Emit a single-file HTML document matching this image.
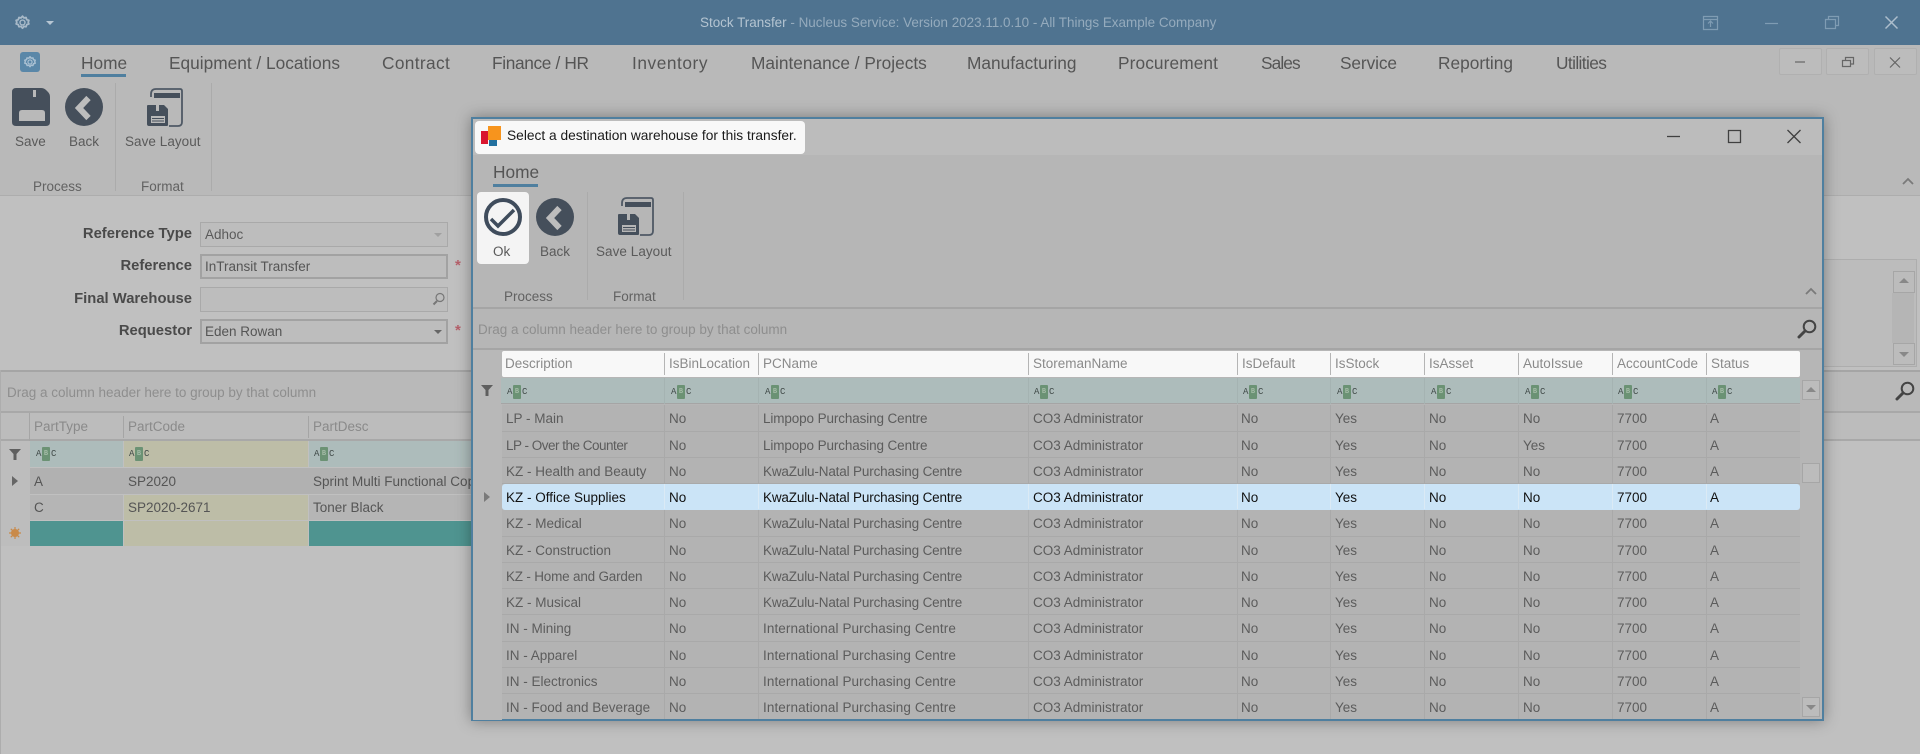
<!DOCTYPE html>
<html style="background:#c0c0c0"><head><meta charset="utf-8"><title>Stock Transfer</title>
<style>
html,body{margin:0;padding:0}
body{width:1920px;height:754px;position:relative;overflow:hidden;background:#c0c0c0;font-family:"Liberation Sans",sans-serif;font-size:13.5px;color:#555;filter:blur(.3px)}
div,span,svg{position:absolute;box-sizing:border-box}
span,.t{white-space:nowrap;line-height:16px}
.tab{top:52px;font-size:17.3px;line-height:22px;color:#555}
.lb{font-size:13.5px;color:#5a5a5a;text-align:center}
.grp{font-size:13.5px;color:#626262;text-align:center}
.sep{width:1px;background:#ababab}
.fn{right:1728px;font-weight:bold;color:#4a4a4a;font-size:14.8px}
.inp{left:200px;width:248px;height:25px;border:1px solid #a9a9a9;background:#bdbdbd;padding:4px 4px;line-height:16px;color:#5a5a5a;font-size:13.5px}
.inp.on{border:2px solid #a2a2a2;padding:3px 3px;color:#555}
.hd{color:#8a8a8a;font-size:13.5px}
.r{left:502px;width:1298px;border-bottom:1px solid #a9a9a9;background:#b3b3b3;color:#5c5c5c;font-size:13.5px}
.r span{top:5.500px}
.r i{position:absolute;top:0;bottom:0;width:1px;background:#a9a9a9}
.c0{left:4px}.c1{left:167px}.c2{left:261px}.c3{left:531px}.c4{left:739px}.c5{left:833px}.c6{left:927px}.c7{left:1021px}.c8{left:1115px}.c9{left:1208px}
.k{letter-spacing:-.16px}.l{letter-spacing:-.12px}.n{letter-spacing:.1px}
.r.sel{background:#cbe4f7;color:#111;border-radius:3px;border-bottom-color:#cbe4f7}
.r.sel i{background:#dbeaf5}
.abc{width:24px;height:15px}
.abc b{position:absolute;top:1px;font:normal 9px/13px "Liberation Mono",monospace;color:#404a48}
.abc em{position:absolute;left:6px;top:0;width:8px;height:14px;background:#6b9274;border-radius:1px;font:bold 7px/14px "Liberation Mono",monospace;color:#a5bca8;text-align:center}
.abc b+em+b{left:15px!important}
.sb{background:#bcbcbc;border:1px solid #a6a6a6}
</style></head><body>

<svg width="0" height="0" style="left:0;top:0"><defs>
<symbol id="floppy" viewBox="0 0 38 38"><path fill="#454f5b" fill-rule="evenodd" d="M4 0H29Q32 0 34 2L36 4Q38 6 38 9V34Q38 38 34 38H4Q0 38 0 34V4Q0 0 4 0ZM21 2V9H24V2ZM7 25V33H33V25Q33 22 30 22H10Q7 22 7 25Z"/></symbol>
<symbol id="back" viewBox="0 0 38 38"><circle cx="19" cy="19" r="19" fill="#454f5b"/><path fill="none" stroke="#bdbdbd" stroke-width="6" d="M23.500 10L14 20L23.500 30"/></symbol>
<symbol id="layout" viewBox="0 0 36 40"><path fill="none" stroke="#4f5965" stroke-width="1.800" d="M4 9V6Q4 1 9 1H33Q35 1 35 3V34Q35 38 31 38H22"/><rect x="7" y="5" width="26" height="5" fill="#454f5b"/><path fill="#454f5b" fill-rule="evenodd" d="M1 17H9V23H12V17H17L21 21V37Q21 38 20 38H2Q0 38 0 36V18Q0 17 1 17ZM4 28V35H18V28Z"/><path stroke="#454f5b" stroke-width="1" d="M5 30.500H17M5 33H17"/></symbol>
<symbol id="gear" viewBox="0 0 24 24"><path fill="none" stroke="currentColor" stroke-width="2.500" stroke-linejoin="round" d="M12 3l2 2.500 3-.5 1 3 3 1-1 2.500 1 2.500-3 1-1 3-3-.5-2 2.500-2-2.500-3 .5-1-3-3-1 1-2.500-1-2.500 3-1 1-3 3 .5z"/><circle cx="12" cy="12" r="3.500" fill="none" stroke="currentColor" stroke-width="2"/></symbol>
<symbol id="mag" viewBox="0 0 20 20"><circle cx="12.500" cy="7.500" r="5.800" fill="none" stroke="#444" stroke-width="2"/><path stroke="#444" stroke-width="3" stroke-linecap="round" d="M8 12L2 18"/></symbol>
<symbol id="fun" viewBox="0 0 12 11"><path fill="#5f5f5f" d="M0 0H12L7.500 5V11H4.500V5Z"/></symbol>
</defs></svg>

<!-- title bar -->
<div style="left:0;top:0;width:1920px;height:45px;background:#4f7390"></div>
<svg style="left:14px;top:13px;color:#a7b9c8" width="17" height="19"><use href="#gear" width="17" height="19"/></svg>
<div style="left:46px;top:21px;width:0;height:0;border:4px solid transparent;border-top:4px solid #b7c6d3"></div>
<span style="left:700px;top:15px;color:#b4c4d1;font-size:13.450px">Stock Transfer <span style="position:static;color:#95abbd">- Nucleus Service: Version 2023.11.0.10 - All Things Example Company</span></span>
<svg style="left:1700px;top:12px" width="210" height="22" fill="none" stroke="#7f9cb3" stroke-width="1.200">
<path d="M3.500 4.500H17.500V17.500H3.500ZM3.500 7.500H17.500M10.500 15V9.500M8 11.500L10.500 9L13 11.500"/>
<path d="M65 11.500H78"/>
<path d="M125.500 7.500H135.500V16.500H125.500ZM128.500 7.500V4.500H138.500V13.500H135.500"/>
<path stroke="#adbecc" stroke-width="1.500" d="M185.500 4.500L197.500 16.500M197.500 4.500L185.500 16.500"/>
</svg>

<!-- menu & ribbon -->
<div style="left:0;top:45px;width:1920px;height:151px;background:#b9b9b9;border-bottom:1px solid #adadad"></div>
<div style="left:20px;top:52px;width:20px;height:20px;border-radius:3px;background:#5a87a8"></div>
<svg style="left:23px;top:55px;color:#a9c0d2" width="14" height="14"><use href="#gear" width="14" height="14"/></svg>
<span class="tab" style="left:81px">Home</span>
<div style="left:81px;top:74px;width:45px;height:3px;background:#4f7f9f"></div>
<span class="tab" style="left:169px">Equipment / Locations</span>
<span class="tab" style="left:382px;letter-spacing:.35px">Contract</span>
<span class="tab" style="left:492px;letter-spacing:-.35px">Finance / HR</span>
<span class="tab" style="left:632px;letter-spacing:.55px">Inventory</span>
<span class="tab" style="left:751px">Maintenance / Projects</span>
<span class="tab" style="left:967px">Manufacturing</span>
<span class="tab" style="left:1118px;letter-spacing:.1px">Procurement</span>
<span class="tab" style="left:1261px;letter-spacing:-.9px">Sales</span>
<span class="tab" style="left:1340px;letter-spacing:-.1px">Service</span>
<span class="tab" style="left:1438px">Reporting</span>
<span class="tab" style="left:1556px;letter-spacing:-.6px">Utilities</span>

<div style="left:1779px;top:48px;width:43px;height:27px;background:#bcbcbc;border:1px solid #b0b0b0;border-radius:2px"></div>
<div style="left:1826px;top:48px;width:43px;height:27px;background:#bcbcbc;border:1px solid #b0b0b0;border-radius:2px"></div>
<div style="left:1874px;top:48px;width:43px;height:27px;background:#bcbcbc;border:1px solid #b0b0b0;border-radius:2px"></div>
<svg style="left:1779px;top:48px" width="140" height="27" fill="none" stroke="#666" stroke-width="1.200">
<path d="M16 14H26"/><path d="M63.500 12.500H71.500V18.500H63.500ZM66.500 12.500V9.500H74.500V16H71.500"/><path d="M111 9.500L121 19.500M121 9.500L111 19.500"/>
</svg>

<svg style="left:12px;top:88px" width="38" height="38"><use href="#floppy" width="38" height="38"/></svg>
<svg style="left:65px;top:88px" width="38" height="38"><use href="#back" width="38" height="38"/></svg>
<svg style="left:147px;top:88px" width="36" height="40"><use href="#layout" width="36" height="40"/></svg>
<span class="lb" style="left:15px;top:134px">Save</span>
<span class="lb" style="left:69px;top:134px">Back</span>
<span class="lb" style="left:125px;top:134px;letter-spacing:.05px">Save Layout</span>
<span class="grp" style="left:33px;top:179px">Process</span>
<span class="grp" style="left:141px;top:179px">Format</span>
<div class="sep" style="left:115px;top:83px;height:108px"></div>
<div class="sep" style="left:211px;top:83px;height:108px"></div>
<svg style="left:1900px;top:175px" width="16" height="12" fill="none" stroke="#7a7a7a" stroke-width="1.800"><path d="M3 9L8 4L13 9"/></svg>

<!-- form -->
<span class="fn" style="top:226px">Reference Type</span>
<span class="fn" style="top:258px">Reference</span>
<span class="fn" style="top:291px">Final Warehouse</span>
<span class="fn" style="top:323px">Requestor</span>
<div class="inp" style="top:222px">Adhoc</div>
<div style="left:434px;top:233px;border:4px solid transparent;border-top:4px solid #a0a0a0"></div>
<div class="inp on" style="top:254px">InTransit Transfer</div>
<div class="inp" style="top:287px"></div>
<svg style="left:432px;top:292px" width="13" height="14" fill="none" stroke="#777" stroke-width="1.200"><circle cx="8" cy="5.500" r="4"/><path stroke-width="2" d="M5 9L1.500 12.500"/></svg>
<div class="inp on" style="top:319px">Eden Rowan</div>
<div style="left:434px;top:330px;border:4px solid transparent;border-top:4px solid #666"></div>
<span style="left:455px;top:258px;color:#b5606a;font-size:15px;font-weight:bold">*</span>
<span style="left:455px;top:323px;color:#b5606a;font-size:15px;font-weight:bold">*</span>

<!-- right memo -->
<div style="left:1823px;top:259px;width:94px;height:108px;border:1px solid #adadad;background:#bcbcbc"></div>
<div style="left:1893px;top:271px;width:22px;height:22px" class="sb"></div>
<div style="left:1892px;top:293px;width:22px;height:50px;background:#b5b5b5"></div>
<div style="left:1893px;top:343px;width:22px;height:22px" class="sb"></div>
<div style="left:1899px;top:278px;border:5px solid transparent;border-bottom:5px solid #888;border-top:0"></div>
<div style="left:1899px;top:352px;border:5px solid transparent;border-top:5px solid #888;border-bottom:0"></div>

<!-- bottom grid -->
<div style="left:0;top:370px;width:1920px;height:43px;background:#b9b9b9;border-top:2px solid #a5a5a5;border-bottom:2px solid #a8a8a8"></div>
<span style="left:7px;top:385px;color:#8e8e8e;font-size:13.5px">Drag a column header here to group by that column</span>
<svg style="left:1895px;top:381px" width="20" height="20"><use href="#mag" width="20" height="20"/></svg>
<div style="left:0;top:413px;width:1920px;height:28px;background:#bcbcbc;border-bottom:2px solid #a8a8a8"></div>
<div style="left:29px;top:413px;width:1px;height:28px;background:#a5a5a5"></div>
<div style="left:123px;top:416px;width:1px;height:22px;background:#a5a5a5"></div>
<div style="left:308px;top:416px;width:1px;height:22px;background:#a5a5a5"></div>
<span class="hd" style="left:34px;top:419px">PartType</span>
<span class="hd" style="left:128px;top:419px">PartCode</span>
<span class="hd" style="left:313px;top:419px">PartDesc</span>

<div style="left:0;top:441px;width:30px;height:105px;background:#bdbdbd"></div>
<svg style="left:9px;top:449px" width="12" height="11"><use href="#fun" width="12" height="11"/></svg>
<div style="left:30px;top:441px;width:93px;height:26px;background:#adbcbb"></div>
<div style="left:124px;top:441px;width:184px;height:26px;background:#bdbda7"></div>
<div style="left:309px;top:441px;width:162px;height:26px;background:#adbcbb"></div>
<div class="abc" style="left:36px;top:447px"><b style="left:0">A</b><em>B</em><b style="left:16px">C</b></div>
<div class="abc" style="left:129px;top:447px"><b style="left:0">A</b><em>B</em><b style="left:16px">C</b></div>
<div class="abc" style="left:314px;top:447px"><b style="left:0">A</b><em>B</em><b style="left:16px">C</b></div>
<div style="left:30px;top:468px;width:441px;height:26px;background:#b1b1b1"></div>
<div style="left:12px;top:476px;border:5px solid transparent;border-left:6px solid #666;border-right:0"></div>
<span style="left:34px;top:474px">A</span><span style="left:128px;top:474px">SP2020</span><span style="left:313px;top:474px">Sprint Multi Functional Copier</span>
<div style="left:30px;top:495px;width:93px;height:25px;background:#b5b5b5"></div>
<div style="left:124px;top:495px;width:184px;height:25px;background:#bdbda7"></div>
<div style="left:309px;top:495px;width:162px;height:25px;background:#b5b5b5"></div>
<span style="left:34px;top:500px">C</span><span style="left:128px;top:500px">SP2020-2671</span><span style="left:313px;top:500px">Toner Black</span>
<div style="left:30px;top:521px;width:93px;height:25px;background:#4f9490"></div>
<div style="left:124px;top:521px;width:184px;height:25px;background:#bdbda7"></div>
<div style="left:309px;top:521px;width:162px;height:25px;background:#4f9490"></div>
<svg style="left:9px;top:527px" width="12" height="12" stroke="#c98a4a" stroke-width="1.200"><path d="M6 0V12M0 6H12M1.800 1.800L10.200 10.200M10.200 1.800L1.800 10.200"/><circle cx="6" cy="6" r="3.400" fill="#c98a4a"/></svg>
<div style="left:0;top:370px;width:1px;height:384px;background:#adadad"></div>

<!-- dialog -->
<div style="left:471px;top:117px;width:1353px;height:604px;background:#b6b6b6;border:2px solid #4f7f9f;box-shadow:0 0 14px rgba(0,0,0,.35)"></div>
<div style="left:473px;top:119px;width:1349px;height:36px;background:#bcbcbc"></div>
<div style="left:475px;top:121px;width:330px;height:33px;background:#f8f8f8;border-radius:4px"></div>
<div style="left:481px;top:131px;width:7px;height:13px;background:#d9152e"></div>
<div style="left:488px;top:126px;width:13px;height:14px;background:#f7941d"></div>
<div style="left:489px;top:140px;width:8px;height:6px;background:#22709f"></div>
<span style="left:507px;top:128px;color:#1a1a1a;font-size:13.750px">Select a destination warehouse for this transfer.</span>
<svg style="left:1660px;top:124px" width="150" height="24" fill="none" stroke="#404040" stroke-width="1.300">
<path d="M7 12.500H20"/><path d="M68.500 6.500H80.500V18.500H68.500Z"/><path d="M127.500 6L140.500 19M140.500 6L127.500 19"/>
</svg>

<span class="tab" style="left:493px;top:161px">Home</span>
<div style="left:493px;top:184px;width:45px;height:3px;background:#4f7f9f"></div>
<div style="left:477px;top:192px;width:52px;height:72px;background:#f4f4f4;border-radius:4px"></div>
<svg style="left:484px;top:198px" width="38" height="38" fill="none"><circle cx="19" cy="19" r="17" stroke="#3f4c5c" stroke-width="4"/><path stroke="#3f4c5c" stroke-width="3.500" d="M7 21L14 28L30 12"/></svg>
<svg style="left:536px;top:198px" width="38" height="38"><use href="#back" width="38" height="38"/></svg>
<svg style="left:618px;top:197px" width="36" height="40"><use href="#layout" width="36" height="40"/></svg>
<span class="lb" style="left:493px;top:244px">Ok</span>
<span class="lb" style="left:540px;top:244px">Back</span>
<span class="lb" style="left:596px;top:244px;letter-spacing:.05px">Save Layout</span>
<span class="grp" style="left:504px;top:289px">Process</span>
<span class="grp" style="left:613px;top:289px">Format</span>
<div class="sep" style="left:587px;top:192px;height:108px"></div>
<div class="sep" style="left:683px;top:192px;height:108px"></div>
<svg style="left:1803px;top:285px" width="16" height="12" fill="none" stroke="#7a7a7a" stroke-width="1.800"><path d="M3 9L8 4L13 9"/></svg>
<div style="left:473px;top:307px;width:1349px;height:2px;background:#a5a5a5"></div>
<span style="left:478px;top:322px;color:#8e8e8e;font-size:13.5px">Drag a column header here to group by that column</span>
<svg style="left:1797px;top:319px" width="20" height="20"><use href="#mag" width="20" height="20"/></svg>
<div style="left:473px;top:348px;width:1349px;height:2px;background:#a5a5a5"></div>
<div style="left:473px;top:350px;width:29px;height:370px;background:#b8b8b8"></div>

<div style="left:502px;top:351px;width:1298px;height:26px;background:#f8f8f8;border-radius:2px"></div>
<div style="left:664px;top:353px;width:1px;height:22px;background:#b5b5b5"></div>
<div style="left:758px;top:353px;width:1px;height:22px;background:#b5b5b5"></div>
<div style="left:1028px;top:353px;width:1px;height:22px;background:#b5b5b5"></div>
<div style="left:1237px;top:353px;width:1px;height:22px;background:#b5b5b5"></div>
<div style="left:1330px;top:353px;width:1px;height:22px;background:#b5b5b5"></div>
<div style="left:1424px;top:353px;width:1px;height:22px;background:#b5b5b5"></div>
<div style="left:1518px;top:353px;width:1px;height:22px;background:#b5b5b5"></div>
<div style="left:1612px;top:353px;width:1px;height:22px;background:#b5b5b5"></div>
<div style="left:1706px;top:353px;width:1px;height:22px;background:#b5b5b5"></div>
<span class="hd" style="left:505px;top:356px">Description</span>
<span class="hd" style="left:669px;top:356px">IsBinLocation</span>
<span class="hd" style="left:763px;top:356px">PCName</span>
<span class="hd" style="left:1033px;top:356px">StoremanName</span>
<span class="hd" style="left:1242px;top:356px">IsDefault</span>
<span class="hd" style="left:1335px;top:356px">IsStock</span>
<span class="hd" style="left:1429px;top:356px">IsAsset</span>
<span class="hd" style="left:1523px;top:356px">AutoIssue</span>
<span class="hd" style="left:1617px;top:356px">AccountCode</span>
<span class="hd" style="left:1711px;top:356px">Status</span>

<div style="left:501px;top:378px;width:1299px;height:26px;background:#adbcbb;border-bottom:1px solid #a5a5a5"></div>
<div style="left:664px;top:378px;width:1px;height:26px;background:#a5b3b2"></div>
<div style="left:758px;top:378px;width:1px;height:26px;background:#a5b3b2"></div>
<div style="left:1028px;top:378px;width:1px;height:26px;background:#a5b3b2"></div>
<div style="left:1237px;top:378px;width:1px;height:26px;background:#a5b3b2"></div>
<div style="left:1330px;top:378px;width:1px;height:26px;background:#a5b3b2"></div>
<div style="left:1424px;top:378px;width:1px;height:26px;background:#a5b3b2"></div>
<div style="left:1518px;top:378px;width:1px;height:26px;background:#a5b3b2"></div>
<div style="left:1612px;top:378px;width:1px;height:26px;background:#a5b3b2"></div>
<div style="left:1706px;top:378px;width:1px;height:26px;background:#a5b3b2"></div>
<svg style="left:481px;top:385px" width="12" height="11"><use href="#fun" width="12" height="11"/></svg>
<div class="abc" style="left:507px;top:385px"><b style="left:0">A</b><em>B</em><b style="left:16px">C</b></div>
<div class="abc" style="left:671px;top:385px"><b style="left:0">A</b><em>B</em><b style="left:16px">C</b></div>
<div class="abc" style="left:765px;top:385px"><b style="left:0">A</b><em>B</em><b style="left:16px">C</b></div>
<div class="abc" style="left:1034px;top:385px"><b style="left:0">A</b><em>B</em><b style="left:16px">C</b></div>
<div class="abc" style="left:1243px;top:385px"><b style="left:0">A</b><em>B</em><b style="left:16px">C</b></div>
<div class="abc" style="left:1337px;top:385px"><b style="left:0">A</b><em>B</em><b style="left:16px">C</b></div>
<div class="abc" style="left:1431px;top:385px"><b style="left:0">A</b><em>B</em><b style="left:16px">C</b></div>
<div class="abc" style="left:1525px;top:385px"><b style="left:0">A</b><em>B</em><b style="left:16px">C</b></div>
<div class="abc" style="left:1618px;top:385px"><b style="left:0">A</b><em>B</em><b style="left:16px">C</b></div>
<div class="abc" style="left:1712px;top:385px"><b style="left:0">A</b><em>B</em><b style="left:16px">C</b></div>

<div class="r" style="top:405px;height:27px"><i style="left:162px"></i><i style="left:256px"></i><i style="left:526px"></i><i style="left:735px"></i><i style="left:828px"></i><i style="left:922px"></i><i style="left:1016px"></i><i style="left:1110px"></i><i style="left:1204px"></i><span class="c0">LP - Main</span><span class="c1">No</span><span class="c2 l">Limpopo Purchasing Centre</span><span class="c3">CO3 Administrator</span><span class="c4">No</span><span class="c5">Yes</span><span class="c6">No</span><span class="c7">No</span><span class="c8">7700</span><span class="c9">A</span></div>
<div class="r" style="top:432px;height:26px"><i style="left:162px"></i><i style="left:256px"></i><i style="left:526px"></i><i style="left:735px"></i><i style="left:828px"></i><i style="left:922px"></i><i style="left:1016px"></i><i style="left:1110px"></i><i style="left:1204px"></i><span class="c0" style="letter-spacing:-.5px">LP - Over the Counter</span><span class="c1">No</span><span class="c2 l">Limpopo Purchasing Centre</span><span class="c3">CO3 Administrator</span><span class="c4">No</span><span class="c5">Yes</span><span class="c6">No</span><span class="c7">Yes</span><span class="c8">7700</span><span class="c9">A</span></div>
<div class="r" style="top:458px;height:26px"><i style="left:162px"></i><i style="left:256px"></i><i style="left:526px"></i><i style="left:735px"></i><i style="left:828px"></i><i style="left:922px"></i><i style="left:1016px"></i><i style="left:1110px"></i><i style="left:1204px"></i><span class="c0">KZ - Health and Beauty</span><span class="c1">No</span><span class="c2 k">KwaZulu-Natal Purchasing Centre</span><span class="c3">CO3 Administrator</span><span class="c4">No</span><span class="c5">Yes</span><span class="c6">No</span><span class="c7">No</span><span class="c8">7700</span><span class="c9">A</span></div>
<div class="r sel" style="top:484px;height:26px"><i style="left:162px"></i><i style="left:256px"></i><i style="left:526px"></i><i style="left:735px"></i><i style="left:828px"></i><i style="left:922px"></i><i style="left:1016px"></i><i style="left:1110px"></i><i style="left:1204px"></i><span class="c0">KZ - Office Supplies</span><span class="c1">No</span><span class="c2 k">KwaZulu-Natal Purchasing Centre</span><span class="c3">CO3 Administrator</span><span class="c4">No</span><span class="c5">Yes</span><span class="c6">No</span><span class="c7">No</span><span class="c8">7700</span><span class="c9">A</span></div>
<div style="left:484px;top:492px;border:5px solid transparent;border-left:6px solid #7a7a7a;border-right:0"></div>
<div class="r" style="top:510px;height:27px"><i style="left:162px"></i><i style="left:256px"></i><i style="left:526px"></i><i style="left:735px"></i><i style="left:828px"></i><i style="left:922px"></i><i style="left:1016px"></i><i style="left:1110px"></i><i style="left:1204px"></i><span class="c0">KZ - Medical</span><span class="c1">No</span><span class="c2 k">KwaZulu-Natal Purchasing Centre</span><span class="c3">CO3 Administrator</span><span class="c4">No</span><span class="c5">Yes</span><span class="c6">No</span><span class="c7">No</span><span class="c8">7700</span><span class="c9">A</span></div>
<div class="r" style="top:537px;height:26px"><i style="left:162px"></i><i style="left:256px"></i><i style="left:526px"></i><i style="left:735px"></i><i style="left:828px"></i><i style="left:922px"></i><i style="left:1016px"></i><i style="left:1110px"></i><i style="left:1204px"></i><span class="c0">KZ - Construction</span><span class="c1">No</span><span class="c2 k">KwaZulu-Natal Purchasing Centre</span><span class="c3">CO3 Administrator</span><span class="c4">No</span><span class="c5">Yes</span><span class="c6">No</span><span class="c7">No</span><span class="c8">7700</span><span class="c9">A</span></div>
<div class="r" style="top:563px;height:26px"><i style="left:162px"></i><i style="left:256px"></i><i style="left:526px"></i><i style="left:735px"></i><i style="left:828px"></i><i style="left:922px"></i><i style="left:1016px"></i><i style="left:1110px"></i><i style="left:1204px"></i><span class="c0" style="letter-spacing:-.2px">KZ - Home and Garden</span><span class="c1">No</span><span class="c2 k">KwaZulu-Natal Purchasing Centre</span><span class="c3">CO3 Administrator</span><span class="c4">No</span><span class="c5">Yes</span><span class="c6">No</span><span class="c7">No</span><span class="c8">7700</span><span class="c9">A</span></div>
<div class="r" style="top:589px;height:26px"><i style="left:162px"></i><i style="left:256px"></i><i style="left:526px"></i><i style="left:735px"></i><i style="left:828px"></i><i style="left:922px"></i><i style="left:1016px"></i><i style="left:1110px"></i><i style="left:1204px"></i><span class="c0">KZ - Musical</span><span class="c1">No</span><span class="c2 k">KwaZulu-Natal Purchasing Centre</span><span class="c3">CO3 Administrator</span><span class="c4">No</span><span class="c5">Yes</span><span class="c6">No</span><span class="c7">No</span><span class="c8">7700</span><span class="c9">A</span></div>
<div class="r" style="top:615px;height:27px"><i style="left:162px"></i><i style="left:256px"></i><i style="left:526px"></i><i style="left:735px"></i><i style="left:828px"></i><i style="left:922px"></i><i style="left:1016px"></i><i style="left:1110px"></i><i style="left:1204px"></i><span class="c0">IN - Mining</span><span class="c1">No</span><span class="c2 n">International Purchasing Centre</span><span class="c3">CO3 Administrator</span><span class="c4">No</span><span class="c5">Yes</span><span class="c6">No</span><span class="c7">No</span><span class="c8">7700</span><span class="c9">A</span></div>
<div class="r" style="top:642px;height:26px"><i style="left:162px"></i><i style="left:256px"></i><i style="left:526px"></i><i style="left:735px"></i><i style="left:828px"></i><i style="left:922px"></i><i style="left:1016px"></i><i style="left:1110px"></i><i style="left:1204px"></i><span class="c0">IN - Apparel</span><span class="c1">No</span><span class="c2 n">International Purchasing Centre</span><span class="c3">CO3 Administrator</span><span class="c4">No</span><span class="c5">Yes</span><span class="c6">No</span><span class="c7">No</span><span class="c8">7700</span><span class="c9">A</span></div>
<div class="r" style="top:668px;height:26px"><i style="left:162px"></i><i style="left:256px"></i><i style="left:526px"></i><i style="left:735px"></i><i style="left:828px"></i><i style="left:922px"></i><i style="left:1016px"></i><i style="left:1110px"></i><i style="left:1204px"></i><span class="c0">IN - Electronics</span><span class="c1">No</span><span class="c2 n">International Purchasing Centre</span><span class="c3">CO3 Administrator</span><span class="c4">No</span><span class="c5">Yes</span><span class="c6">No</span><span class="c7">No</span><span class="c8">7700</span><span class="c9">A</span></div>
<div class="r" style="top:694px;height:25px;border-bottom:none"><i style="left:162px"></i><i style="left:256px"></i><i style="left:526px"></i><i style="left:735px"></i><i style="left:828px"></i><i style="left:922px"></i><i style="left:1016px"></i><i style="left:1110px"></i><i style="left:1204px"></i><span class="c0">IN - Food and Beverage</span><span class="c1">No</span><span class="c2 n">International Purchasing Centre</span><span class="c3">CO3 Administrator</span><span class="c4">No</span><span class="c5">Yes</span><span class="c6">No</span><span class="c7">No</span><span class="c8">7700</span><span class="c9">A</span></div>

<!-- dialog scrollbar -->
<div class="sb" style="left:1802px;top:380px;width:18px;height:20px"></div>
<div style="left:1806px;top:387px;border:5px solid transparent;border-bottom:5px solid #888;border-top:0"></div>
<div class="sb" style="left:1802px;top:463px;width:18px;height:20px"></div>
<div class="sb" style="left:1802px;top:697px;width:18px;height:20px"></div>
<div style="left:1806px;top:705px;border:5px solid transparent;border-top:5px solid #888;border-bottom:0"></div>
</body></html>
